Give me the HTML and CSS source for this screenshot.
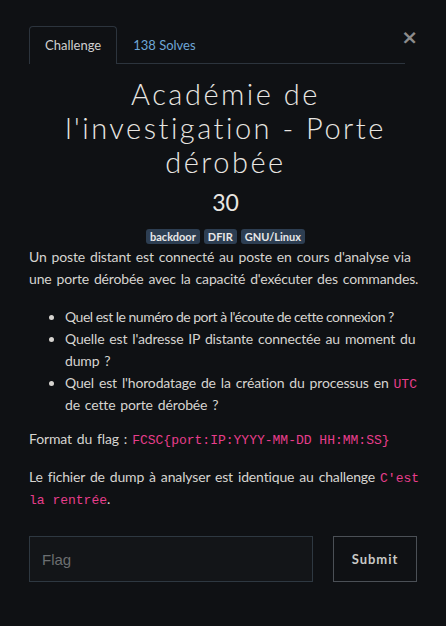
FILE: index.html
```html
<!DOCTYPE html>
<html lang="fr">
<head>
<meta charset="utf-8">
<link rel="stylesheet" href="styles.css">
</head>
<body>
<div class="modal">
  <button class="close" aria-label="Close">&times;</button>
  <nav class="tabs">
    <a class="tab active">Challenge</a>
    <a class="tab">138 Solves</a>
  </nav>
  <h2 class="title">Académie de l'investigation - Porte dérobée</h2>
  <div class="value">30</div>
  <div class="tags">
    <span class="tag">backdoor</span>
    <span class="tag">DFIR</span>
    <span class="tag">GNU/Linux</span>
  </div>
  <div class="desc">
    <p>Un poste distant est connecté au poste en cours d'analyse via une porte dérobée avec la capacité d'exécuter des commandes.</p>
    <ul>
      <li class="tight">Quel est le numéro de port à l'écoute de cette connexion&nbsp;?</li>
      <li>Quelle est l'adresse IP distante connectée au moment du dump&nbsp;?</li>
      <li>Quel est l'horodatage de la création du processus en <code>UTC</code> de cette porte dérobée&nbsp;?</li>
    </ul>
    <p>Format du flag&nbsp;: <code>FCSC{port:IP:YYYY-MM-DD HH:MM:SS}</code></p>
    <p>Le fichier de dump à analyser est identique au challenge <code>C'est la rentrée</code>.</p>
  </div>
  <form class="submit-row">
    <input class="flag" type="text" placeholder="Flag">
    <button class="btn" type="button">Submit</button>
  </form>
</div>
</body>
</html>
```
FILE: styles.css
```css
html, body {
  margin: 0;
  padding: 0;
  background: #0f1114;
}
body {
  font-family: Lato, "Noto Sans", sans-serif;
  color: #d6d4d0;
  font-size: 14px;
}
.modal {
  position: relative;
  padding: 26px 24px 0 29px;
}
.close {
  position: absolute;
  top: 26px;
  right: 28px;
  background: none;
  border: 0;
  color: #8c8c8c;
  font-family: "DejaVu Sans", sans-serif;
  font-size: 20px;
  font-weight: bold;
  line-height: 22px;
  padding: 0;
}
.tabs {
  display: flex;
  width: 376px;
  border-bottom: 1px solid #2c343d;
}
.tab {
  display: block;
  height: 36px;
  line-height: 36px;
  padding: 0 15px;
  font-size: 13px;
  color: #6ea6d6;
  border: 1px solid transparent;
  border-bottom: 0;
  border-radius: 4px 4px 0 0;
  margin-bottom: -1px;
}
.tab.active {
  color: #d0d0d0;
  border-color: #2c343d;
  background: #0f1114;
  height: 37px;
}
.title {
  margin: 13px auto 0;
  max-width: 370px;
  text-align: center;
  font-family: Lato, sans-serif;
  font-weight: 300;
  font-size: 29px;
  line-height: 34px;
  color: #e8e6e2;
  letter-spacing: 2.5px;
}
.value {
  text-align: center;
  font-size: 23px;
  line-height: 30px;
  margin-top: 8px;
  color: #e8e6e2;
}
.tags {
  display: flex;
  justify-content: center;
  gap: 4px;
  margin-top: 12px;
}
.tag {
  background: #2d3e52;
  color: #e8e8e8;
  font-size: 11px;
  font-weight: bold;
  line-height: 15px;
  padding: 0 4px;
  border-radius: 3px;
}
.desc {
  margin-top: 2px;
  line-height: 22px;
  letter-spacing: -0.15px;
  word-spacing: 1.5px;
}
.desc p {
  margin: 0 0 16px;
}
.desc ul {
  margin: 0 -4px 12px 0;
  padding-left: 36px;
}
.desc li.tight {
  letter-spacing: -0.5px;
  word-spacing: 0;
  white-space: nowrap;
}
code {
  font-family: "Liberation Mono", monospace;
  font-size: 13px;
  line-height: 1;
  letter-spacing: 0;
  word-spacing: 0;
  color: #e83e8c;
}
.submit-row {
  display: flex;
  gap: 20px;
  margin-top: 26px;
}
.flag {
  width: 284px;
  height: 46px;
  box-sizing: border-box;
  background: #131518;
  border: 1px solid #2e3841;
  color: #ddd;
  font-family: "Liberation Sans", sans-serif;
  font-size: 15px;
  padding: 0 12px;
  margin: 0;
}
.flag::placeholder {
  color: #6c6e70;
}
.btn {
  width: 84px;
  height: 46px;
  box-sizing: border-box;
  background: transparent;
  border: 1px solid #4b5056;
  color: #c9c9c6;
  font-family: Lato, sans-serif;
  font-weight: bold;
  font-size: 13px;
  letter-spacing: 1px;
  margin: 0;
}
```
